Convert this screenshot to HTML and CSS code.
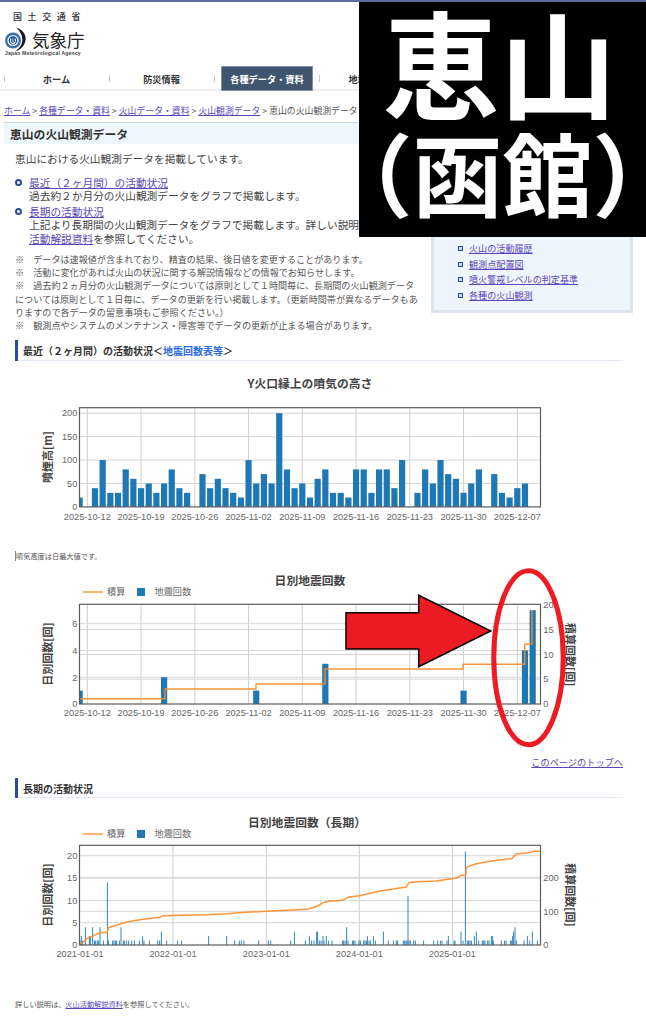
FILE: index.html
```html
<!DOCTYPE html>
<html lang="ja">
<head>
<meta charset="utf-8">
<title>恵山の火山観測データ</title>
<link rel="stylesheet" href="styles.css">
</head>
<body>
<header class="site-header">
  <div class="ministry">国土交通省</div>
  <div class="brand">
    <svg class="mark" viewBox="0 0 30 30" width="30" height="30" aria-hidden="true">
      <circle cx="12" cy="15.500" r="8" fill="#3d6fb0"/>
      <circle cx="12" cy="15.500" r="5.600" fill="#e8eef7"/>
      <circle cx="12" cy="15.500" r="4.300" fill="#24508f"/>
      <path d="M9.700 13.500v3a2.300 2.300 0 0 0 4.600 0v-3" fill="none" stroke="#fff" stroke-width="1"/>
      <path d="M12 13.500v5" stroke="#fff" stroke-width=".8"/>
      <path d="M15 2.500C22.500 5 25.500 10 24.500 15.500 23.500 21 19.500 25 14 26.500 19 23 21.300 19.500 21.400 14.500 21.500 10 19 6 15 2.500Z" fill="#1a1a1a"/>
    </svg>
    <span class="brand-name">気象庁</span>
  </div>
  <div class="brand-en">Japan Meteorological Agency</div>
</header>

<nav class="gnav">
  <div class="gnav-item">ホーム</div>
  <div class="gnav-item">防災情報</div>
  <div class="gnav-item"><span class="gnav-active">各種データ・資料</span></div>
  <div class="gnav-item">地域の情報</div>
</nav>

<div class="crumbs"><a href="#">ホーム</a> &gt; <a href="#">各種データ・資料</a> &gt; <a href="#">火山データ・資料</a> &gt; <a href="#">火山観測データ</a> &gt; 恵山の火山観測データ</div>

<h1 class="page-title">恵山の火山観測データ</h1>

<div class="intro">
  <div class="intro-main">
    <p class="lead">恵山における火山観測データを掲載しています。</p>
    <ul class="toc">
      <li><a href="#recent">最近（２ヶ月間）の活動状況</a><br>過去約２か月分の火山観測データをグラフで掲載します。</li>
      <li><a href="#long">長期の活動状況</a><br>上記より長期間の火山観測データをグラフで掲載します。詳しい説明は、<a href="#">火山<br>活動解説資料</a>を参照してください。</li>
    </ul>
    <div class="notes">
      <p>※　データは速報値が含まれており、精査の結果、後日値を変更することがあります。</p>
      <p>※　活動に変化があれば火山の状況に関する解説情報などの情報でお知らせします。</p>
      <p>※　過去約２ヵ月分の火山観測データについては原則として１時間毎に、長期間の火山観測データについては原則として１日毎に、データの更新を行い掲載します。（更新時間帯が異なるデータもありますので各データの留意事項もご参照ください。）</p>
      <p>※　観測点やシステムのメンテナンス・障害等でデータの更新が止まる場合があります。</p>
    </div>
  </div>
  <aside class="side">
    <ul class="side-list">
      <li><a href="#">火山の活動履歴</a></li>
      <li><a href="#">観測点配置図</a></li>
      <li><a href="#">噴火警戒レベルの判定基準</a></li>
      <li><a href="#">各種の火山観測</a></li>
    </ul>
  </aside>
</div>

<main class="content">
  <h2 class="section-head" id="recent">最近（２ヶ月間）の活動状況<span class="head-link">＜<a href="#">地震回数表等</a>＞</span></h2>
  <div class="chart chart-plume" id="chart-plume"></div>
  <p class="small-note note-plume">噴気高度は日最大値です。</p>
  <div class="chart chart-quake" id="chart-quake"></div>
  <p class="top-link"><a href="#">このページのトップへ</a></p>
  <h2 class="section-head section-long" id="long">長期の活動状況</h2>
  <div class="chart chart-long" id="chart-long"></div>
  <p class="small-note note-last">詳しい説明は、<a href="#">火山活動解説資料</a>を参照してください。</p>
</main>

<div class="banner">
  <div class="banner-one">恵山</div>
  <div class="banner-two">（函館）</div>
</div>

<svg class="annotation" viewBox="0 0 646 1024" width="646" height="1024" aria-hidden="true">
  <polygon points="346,612.700 418.700,612.700 418.700,595.300 490.700,631 418.700,666.700 418.700,649 346,649" fill="#ed1c24" stroke="#000" stroke-width="1.500"/>
  <ellipse cx="528.500" cy="657.700" rx="34.700" ry="87" fill="none" stroke="#ed1c24" stroke-width="5"/>
</svg>

<script src="script.js"></script>
</body>
</html>
```
FILE: styles.css
```css
*, *::before, *::after { box-sizing: border-box; }
html, body { margin: 0; padding: 0; }
body {
  width: 646px;
  height: 1024px;
  overflow: hidden;
  position: relative;
  background: #fff;
  color: #444;
  border-top: 2px solid #5a6b9c;
  font-family: "Noto Sans CJK JP", "Liberation Sans", sans-serif;
}
p, h1, h2, ul { margin: 0; padding: 0; }
ul { list-style: none; }
a { color: #5a48b8; text-decoration: underline; }

.site-header { height: 64px; padding-top: 9px; }
.ministry {
  margin-left: 13px;
  font-size: 9px;
  line-height: 12px;
  letter-spacing: 5.600px;
  font-weight: 500;
  color: #333;
}
.brand { display: flex; align-items: center; margin: 5px 0 0 1px; height: 24px; }
.mark { flex: none; }
.brand-name { font-size: 17.500px; line-height: 22px; color: #222; margin-left: 1px; }
.brand-en {
  margin: -2px 0 0 5px;
  font-family: "Liberation Sans", sans-serif;
  font-size: 5px;
  line-height: 6px;
  letter-spacing: .2px;
  color: #444;
  font-weight: 700;
}

.gnav {
  display: flex;
  height: 25px;
  padding-left: 4px;
  border-bottom: 2px solid #eee;
  font-size: 9.200px;
  font-weight: 700;
  color: #333;
}
.gnav-item {
  position: relative;
  width: 105px;
  flex: none;
  height: 25px;
  display: flex;
  align-items: center;
  justify-content: center;
}
.gnav-item::before {
  content: "";
  position: absolute;
  left: 0;
  top: 9px;
  height: 7px;
  border-left: 1px solid #c8c8c8;
}
.gnav-active {
  width: 92px;
  height: 25px;
  margin-left: 1px;
  display: flex;
  align-items: center;
  justify-content: center;
  background: #3f566e;
  border: 1px solid #7f92a8;
  color: #fff;
}

.crumbs {
  padding: 13px 0 5px 4px;
  font-size: 8.850px;
  line-height: 13px;
  white-space: nowrap;
  overflow: hidden;
  color: #555;
}

.page-title {
  margin: 0 6px 0 4px;
  height: 22px;
  padding-left: 6px;
  display: flex;
  align-items: center;
  background: #eef7fd;
  border-top: 1px solid #c8d4e2;
  font-size: 11.800px;
  font-weight: 700;
  color: #333;
}

.intro { display: flex; align-items: flex-start; padding-left: 15px; }
.intro-main { width: 406px; flex: none; }
.lead { margin-top: 8px; font-size: 10.700px; line-height: 13.500px; }
.toc { margin-top: 10px; font-size: 10.700px; line-height: 13.500px; }
.toc li { position: relative; padding-left: 14px; margin-bottom: 2px; }
.toc li::before {
  content: "";
  position: absolute;
  left: 0;
  top: 3px;
  width: 7px;
  height: 7px;
  border: 2px solid #2c4a94;
  border-radius: 50%;
}
.notes { margin-top: 8px; font-size: 9.100px; line-height: 13.200px; color: #555; }

.side {
  margin: 6px 0 0 10px;
  width: 202px;
  flex: none;
  padding: 88px 10px 7px 24px;
  background: #eef6fd;
  border: 3px solid #dde3f0;
}
.side-list { font-size: 9.100px; line-height: 15.500px; }
.side-list li { position: relative; padding-left: 11px; }
.side-list li::before {
  content: "";
  position: absolute;
  left: 0;
  top: 5px;
  width: 5px;
  height: 5px;
  border: 1.500px solid #2c4a94;
  background: #cfd8ee;
}

.content { padding: 0 23px 0 15px; }
.section-head {
  margin-top: 8px;
  height: 21px;
  padding-left: 5px;
  display: flex;
  align-items: center;
  border-left: 3px solid #2f4a9a;
  font-size: 10px;
  font-weight: 700;
  color: #333;
  position: relative;
}
.section-head::after {
  content: "";
  position: absolute;
  left: 0;
  right: 0;
  bottom: 0;
  border-bottom: 1px solid #e5e8f5;
}
.head-link { font-weight: 700; }
.head-link a { color: #2a6be0; text-decoration: none; }
.section-long { margin-top: 10px; height: 20px; }

.chart { margin-left: -15px; width: 646px; }
.chart svg { display: block; }
.chart-plume { margin-top: 9px; height: 170px; }
.chart-quake { margin-top: 9px; height: 155px; }
.chart-long { margin-top: 7px; height: 165px; }

.small-note { font-size: 7.200px; line-height: 10px; color: #555; }
.note-plume { margin-top: 11px; border-left: 1px solid #888; }
.note-last { margin-top: 29px; }
.top-link { margin-top: 31px; text-align: right; font-size: 9.200px; line-height: 12px; }

.tick { font-family: "Liberation Sans", sans-serif; font-size: 9.200px; fill: #666; }
.axis-title { font-size: 11px; font-weight: 700; fill: #444; }
.chart-title { font-size: 11.800px; font-weight: 700; fill: #444; }
.legend { font-size: 9.200px; fill: #666; }

.banner {
  position: absolute;
  left: 359px;
  top: 0;
  width: 287px;
  height: 235px;
  background: #000;
  color: #fff;
  font-weight: 700;
  display: flex;
  flex-direction: column;
  align-items: center;
}
.banner-one { font-size: 117px; line-height: 112px; height: 112px; margin-top: 2px; margin-right: 6px; flex: none; white-space: nowrap; }
.banner-two {
  font-size: 90px;
  line-height: 100px;
  height: 100px;
  margin-top: 5px;
  flex: none;
  white-space: nowrap;
  font-feature-settings: "halt";
}

.annotation { position: absolute; left: 0; top: -2px; pointer-events: none; }
```
FILE: script.js
```js
var PLOT = { left: 79.5, right: 540.5 };
var BLUE = '#1f77b4';
var ORANGE = '#ff8a24';

function line(x1, y1, x2, y2, color, w) {
  return '<line x1="' + x1 + '" y1="' + y1 + '" x2="' + x2 + '" y2="' + y2 + '" stroke="' + color + '" stroke-width="' + (w || 1) + '"/>';
}
function text(x, y, str, cls, anchor, extra) {
  return '<text class="' + cls + '" x="' + x + '" y="' + y + '" text-anchor="' + (anchor || 'middle') + '"' + (extra || '') + '>' + str + '</text>';
}
function rotated(x, y, str, deg) {
  return '<text class="axis-title" text-anchor="middle" dominant-baseline="central" transform="translate(' + x + ' ' + y + ') rotate(' + deg + ')">' + str + '</text>';
}

function draw(id, c) {
  var s = '';
  if (c.title) s += text(c.titleX || 310, c.titleY, c.title, 'chart-title');
  if (c.legend) {
    s += line(83, c.legend, 103, c.legend, ORANGE, 1.3);
    s += text(107, c.legend + 3.2, '積算', 'legend', 'start');
    s += '<rect x="137" y="' + (c.legend - 4) + '" width="8" height="8" fill="' + BLUE + '"/>';
    s += text(154.5, c.legend + 3.2, '地震回数', 'legend', 'start');
  }
  c.xGrid.forEach(function (x) { s += line(x, c.top, x, c.bottom, '#cfcfcf'); });
  c.yGrid.forEach(function (y) { s += line(PLOT.left, y, PLOT.right, y, '#d6d6d6'); });
  c.bars.forEach(function (b) {
    var x1 = Math.max(PLOT.left, b[0] - c.barW / 2);
    var x2 = Math.min(PLOT.right, b[0] + c.barW / 2);
    var y = c.bottom - b[1] * c.unit;
    s += '<rect x="' + x1 + '" y="' + y + '" width="' + (x2 - x1) + '" height="' + (b[1] * c.unit) + '" fill="' + BLUE + '"/>';
  });
  if (c.path) s += '<polyline points="' + c.path + '" fill="none" stroke="' + ORANGE + '" stroke-opacity=".9" stroke-width="' + c.pathW + '"/>';
  s += '<rect x="' + PLOT.left + '" y="' + c.top + '" width="' + (PLOT.right - PLOT.left) + '" height="' + (c.bottom - c.top) + '" fill="none" stroke="#5c5c5c" stroke-width="1.200"/>';
  c.xTicks.forEach(function (t) { s += text(t[0], c.xLabelY, t[1], 'tick'); });
  c.yTicks.forEach(function (t) { s += text(77.3, t[0] + 3.2, t[1], 'tick', 'end'); });
  (c.rTicks || []).forEach(function (t) { s += text(543.3, t[0] + 3.2, t[1], 'tick', 'start'); });
  s += rotated(47, c.leftTitle[0], c.leftTitle[1], -90);
  if (c.rightTitle) s += rotated(571, c.rightTitle[0], c.rightTitle[1], 90);
  document.getElementById(id).innerHTML =
    '<svg viewBox="0 ' + c.y + ' 646 ' + c.h + '" width="646" height="' + c.h + '" role="img">' + s + '</svg>';
}

/* short-range date axis: pitch of one day, 2025-10-12 = 87.3 */
function dayX(d) { return 87.3 + d * 53.75 / 7; }
var shortX = [], shortLabels = ['2025-10-12', '2025-10-19', '2025-10-26', '2025-11-02', '2025-11-09', '2025-11-16', '2025-11-23', '2025-11-30', '2025-12-07'];
shortLabels.forEach(function (l, i) { shortX.push(dayX(i * 7)); });
var shortTicks = shortLabels.map(function (l, i) { return [shortX[i], l]; });

var plume = [20, 0, 40, 100, 30, 30, 80, 60, 40, 50, 30, 50, 80, 40, 30, 0, 70, 40, 60, 40, 30, 20, 100, 50, 70, 50, 200, 80, 40, 50, 20, 60, 80, 30, 30, 20, 80, 80, 30, 80, 80, 40, 100, 0, 30, 80, 50, 100, 70, 60, 30, 50, 80, 0, 70, 30, 20, 40, 50];
var plumeUnit = 93.7 / 200;
draw('chart-plume', {
  y: 370, h: 170, top: 407.7, bottom: 506.9, unit: plumeUnit, barW: 6.2,
  title: 'Y火口縁上の噴気の高さ', titleY: 388, titleX: 310,
  xGrid: shortX,
  yGrid: [50, 100, 150, 200].map(function (v) { return 506.9 - v * plumeUnit; }),
  bars: plume.map(function (v, i) { return [dayX(i - 1), v]; }),
  xTicks: shortTicks, xLabelY: 519.7,
  yTicks: [[506.9, '0'], [483.5, '50'], [460, '100'], [436.600, '150'], [413.2, '200']],
  leftTitle: [457, '噴煙高[m]']
});

draw('chart-quake', {
  y: 570, h: 155, top: 604.3, bottom: 704, unit: 13.4, barW: 6.2,
  title: '日別地震回数', titleY: 584.5, titleX: 310, legend: 592,
  xGrid: shortX,
  yGrid: [623.7, 650.5, 677.3, 679.2, 654.5, 629.6],
  bars: [[-1, 1], [10, 2], [22, 1], [31, 3], [49, 1], [57, 4], [58, 7]].map(function (b) { return [dayX(b[0]), b[1]]; }),
  path: '79.5,698.8 165,698.8 165,688.9 256,688.9 256,683.9 325,683.900 325,669 463,669 463,664.200 524.700,664.200 524.700,644.300 532,644.300 532,610',
  pathW: 1.5,
  xTicks: shortTicks, xLabelY: 716,
  yTicks: [[704, '0'], [677.3, '2'], [650.5, '4'], [623.7, '6']],
  rTicks: [[704, '0'], [679.2, '5'], [654.5, '10'], [629.6, '15'], [604.7, '20']],
  leftTitle: [654, '日別回数[回]'],
  rightTitle: [654.7, '積算回数[回]']
});

/* long-range spikes: [x * 3, count] read from the reference */
var spikesA = [[240,1],[244,2],[248,1],[256,4],[268,2],[271,2],[278,4],[283,1],[287,1],[292,1],[296,1],[300,4],[310,1],[322,14],[325,1],[338,1],[342,1],[346,1],[350,1],[358,1],[363,4],[370,1],[373,1],[380,1],[386,1],[395,1],[403,1],[418,1],[428,2],[432,1],[448,1],[473,1],[479,1],[484,3],[500,1],[533,1],[545,1],[626,2],[680,2],[704,1],[718,1],[724,1],[732,1],[776,1],[805,1],[812,1],[872,1],[883,3],[916,1],[928,2],[935,1],[942,1],[950,3],[953,3],[958,1],[963,1]];
var spikesB = [[0,2],[3,1],[10,2],[17,1],[27,1],[58,1],[62,1],[66,1],[71,4],[75,1],[88,1],[92,1],[96,1],[108,1],[112,1],[122,1],[126,1],[130,1],[133,2],[138,1],[142,1],[151,2],[157,1],[181,3],[196,1],[211,1],[220,1],[223,1],[241,1],[245,1],[249,1],[252,1],[255,11],[258,1],[262,1],[272,1],[277,1],[302,1],[332,1],[343,1],[352,1],[357,1],[372,1],[376,2],[393,1],[396,1],[414,3],[420,1],[427,21],[433,1],[437,1],[441,1],[445,1],[454,2],[460,3],[467,1],[478,1],[482,1],[486,1],[494,1],[498,1],[505,2],[508,2],[511,1],[535,1],[545,1],[549,1],[562,1],[566,1],[569,2],[572,3],[576,4],[580,1],[603,1],[613,2],[620,1],[628,3],[643,1]];
var longBars = spikesA.map(function (b) { return [b[0] / 3, b[1]]; })
  .concat(spikesB.map(function (b) { return [323 + b[0] / 3, b[1]]; }));
var curveA = [[240,510],[262,490],[300,473],[322,472],[325,458],[345,452],[370,444],[400,437],[430,433],[480,427],[490,422],[550,421],[620,419],[680,416],[735,412],[800,409],[880,405],[925,402],[955,392],[969,383]];
var curveB = [[20,378],[60,376],[75,367],[110,362],[160,350],[185,346],[250,336],[258,323],[280,320],[340,318],[400,309],[415,301],[428,300],[430,277],[460,266],[510,257],[565,251],[580,237],[610,234],[635,229],[650,229]];
var curve = curveA.map(function (p) { return (p[0] / 3).toFixed(1) + ',' + (775 + p[1] / 3).toFixed(1); })
  .concat(curveB.map(function (p) { return (323 + p[0] / 3).toFixed(1) + ',' + (775 + p[1] / 3).toFixed(1); }));

draw('chart-long', {
  y: 805, h: 165, top: 845.3, bottom: 945, unit: 4.46, barW: 0.9,
  title: '日別地震回数（長期）', titleY: 826.500, titleX: 307, legend: 834,
  xGrid: [173, 266.3, 359.3, 452.3],
  yGrid: [922.7, 900.7, 878, 855.7, 911.3, 877.7],
  bars: longBars,
  path: curve.join(' '), pathW: 1.5,
  xTicks: [[80, '2021-01-01'], [173, '2022-01-01'], [266.3, '2023-01-01'], [359.3, '2024-01-01'], [452.3, '2025-01-01']],
  xLabelY: 957,
  yTicks: [[945, '0'], [922.7, '5'], [900.7, '10'], [878, '15'], [855.7, '20']],
  rTicks: [[945, '0'], [911.3, '100'], [877.7, '200']],
  leftTitle: [895, '日別回数[回]'],
  rightTitle: [895, '積算回数[回]']
});
```
